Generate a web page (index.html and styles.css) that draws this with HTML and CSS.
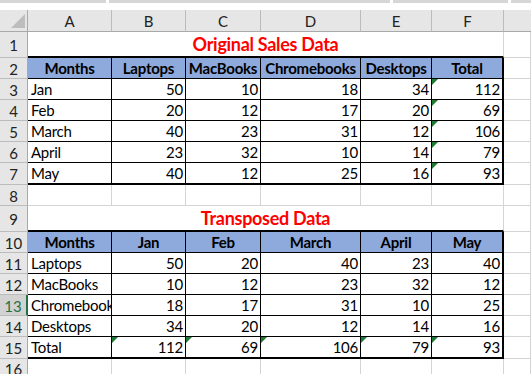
FILE: index.html
```html
<!DOCTYPE html>
<html>
<head>
<meta charset="utf-8">
<link rel="stylesheet" href="styles.css">
</head>
<body>
<div class="sheet">
  <div class="topbar">
    <span class="seg s1"></span><span class="gap"></span>
    <span class="seg s2"></span><span class="gap"></span>
    <span class="seg s3"></span><span class="gap"></span>
    <span class="seg s4"></span>
  </div>
  <div class="grid">
    <!-- column headers -->
    <div class="ch corner"><svg width="27" height="21" viewBox="0 0 27 21"><polygon points="11,18 25,18 25,4" fill="#bdbdbd"/></svg></div>
    <div class="ch">A</div><div class="ch">B</div><div class="ch">C</div><div class="ch">D</div><div class="ch">E</div><div class="ch">F</div><div class="ch last"></div>

    <!-- row 1 -->
    <div class="rh">1</div>
    <div class="title">Original Sales Data</div>
    <div class="c"></div>

    <!-- row 2 -->
    <div class="rh">2</div>
    <div class="t th">Months</div><div class="t th">Laptops</div><div class="t th">MacBooks</div><div class="t th">Chromebooks</div><div class="t th">Desktops</div><div class="t th r">Total</div><div class="c"></div>

    <!-- row 3 -->
    <div class="rh">3</div>
    <div class="t tx">Jan</div><div class="t n">50</div><div class="t n">10</div><div class="t n">18</div><div class="t n">34</div><div class="t n r g">112</div><div class="c"></div>
    <div class="rh">4</div>
    <div class="t tx">Feb</div><div class="t n">20</div><div class="t n">12</div><div class="t n">17</div><div class="t n">20</div><div class="t n r g">69</div><div class="c"></div>
    <div class="rh">5</div>
    <div class="t tx">March</div><div class="t n">40</div><div class="t n">23</div><div class="t n">31</div><div class="t n">12</div><div class="t n r g">106</div><div class="c"></div>
    <div class="rh">6</div>
    <div class="t tx">April</div><div class="t n">23</div><div class="t n">32</div><div class="t n">10</div><div class="t n">14</div><div class="t n r g">79</div><div class="c"></div>
    <div class="rh">7</div>
    <div class="t tx b">May</div><div class="t n b">40</div><div class="t n b">12</div><div class="t n b">25</div><div class="t n b">16</div><div class="t n r b g">93</div><div class="c"></div>

    <!-- row 8 -->
    <div class="rh">8</div>
    <div class="c"></div><div class="c"></div><div class="c"></div><div class="c"></div><div class="c"></div><div class="c"></div><div class="c"></div>

    <!-- row 9 -->
    <div class="rh">9</div>
    <div class="title">Transposed Data</div>
    <div class="c"></div>

    <!-- row 10 -->
    <div class="rh">10</div>
    <div class="t th">Months</div><div class="t th">Jan</div><div class="t th">Feb</div><div class="t th">March</div><div class="t th">April</div><div class="t th r">May</div><div class="c"></div>

    <div class="rh">11</div>
    <div class="t tx">Laptops</div><div class="t n">50</div><div class="t n">20</div><div class="t n">40</div><div class="t n">23</div><div class="t n r">40</div><div class="c"></div>
    <div class="rh">12</div>
    <div class="t tx">MacBooks</div><div class="t n">10</div><div class="t n">12</div><div class="t n">23</div><div class="t n">32</div><div class="t n r">12</div><div class="c"></div>
    <div class="rh active">13</div>
    <div class="t tx">Chromebook</div><div class="t n">18</div><div class="t n">17</div><div class="t n">31</div><div class="t n">10</div><div class="t n r">25</div><div class="c"></div>
    <div class="rh">14</div>
    <div class="t tx">Desktops</div><div class="t n">34</div><div class="t n">20</div><div class="t n">12</div><div class="t n">14</div><div class="t n r">16</div><div class="c"></div>
    <div class="rh">15</div>
    <div class="t tx b">Total</div><div class="t n b g">112</div><div class="t n b g">69</div><div class="t n b g">106</div><div class="t n b g">79</div><div class="t n r b g">93</div><div class="c"></div>

    <!-- row 16 -->
    <div class="rh">16</div>
    <div class="c"></div><div class="c"></div><div class="c"></div><div class="c"></div><div class="c"></div><div class="c"></div><div class="c"></div>
  </div>
</div>
</body>
</html>
```
FILE: styles.css
```css
* { box-sizing: border-box; }
html, body { margin: 0; padding: 0; background: #fff; }
body {
  width: 531px;
  height: 374px;
  overflow: hidden;
  font-family: Lato, "Liberation Sans", sans-serif;
  font-size: 15px;
  color: #000;
}
.sheet { width: 531px; height: 374px; overflow: hidden; }

.topbar {
  height: 10px;
  display: flex;
  align-items: flex-start;
  background: #fff;
}
.topbar .seg { height: 3px; background: #d6d6d6; }
.topbar .gap { width: 3px; height: 3px; }
.topbar .s1 { width: 106px; }
.topbar .s2 { width: 281px; }
.topbar .s3 { width: 115px; }
.topbar .s4 { flex: 1; }

.grid {
  display: grid;
  grid-template-columns: 28px 84px 74px 75px 100px 71px 72px 1fr;
  grid-template-rows: 22px 26px 21px 21px 21px 21px 21px 22px 21px 26px 21px 21px 21px 21px 21px 22px 20px;
  height: 364px;
}
.grid > div {
  border-right: 1px solid #d4d4d4;
  border-bottom: 1px solid #d4d4d4;
  overflow: hidden;
  white-space: nowrap;
  line-height: 18px;
  display: flex;
  align-items: flex-end;
  position: relative;
}

.grid > .ch {
  background: #e6e6e6;
  border-right-color: #bcbcbc;
  border-bottom-color: #a9a9a9;
  justify-content: center;
  align-items: center;
  color: #222;
  font-size: 15px;
}
.grid > .ch.corner { border-right-color: #a9a9a9; padding: 0; align-items: stretch; }
.grid > .ch.last { border-right: none; }

.grid > .rh {
  background: #e6e6e6;
  border-right-color: #a9a9a9;
  border-bottom-color: #bcbcbc;
  justify-content: center;
  align-items: center;
  color: #222;
  font-size: 15px;
  padding-top: 1px;
}
.grid > .rh.active {
  background: #d2d2d2;
  color: #217346;
  border-right: 2px solid #217346;
}

.grid > .title {
  grid-column: 2 / span 6;
  border-bottom: 2px solid #000;
  justify-content: center;
  color: #ff0000;
  font-weight: 700;
  font-size: 18px;
  letter-spacing: -0.3px;
  line-height: 22px;
  padding-bottom: 1px;
}

.grid > .t {
  border-right-color: #000;
  border-bottom-color: #000;
  padding-bottom: 1px;
  letter-spacing: -0.25px;
}
.grid > .th {
  background: #8ea9db;
  font-weight: 700;
  justify-content: center;
}
.grid > .tx { padding-left: 3px; }
.grid > .n { justify-content: flex-end; padding-right: 2px; }
.grid > .r { border-right-width: 2px; }
.grid > .b { border-bottom-width: 2px; }
.grid > .g::before {
  content: "";
  position: absolute;
  left: 0;
  top: 0;
  border-top: 6px solid #1e7b34;
  border-right: 6px solid transparent;
}
```
